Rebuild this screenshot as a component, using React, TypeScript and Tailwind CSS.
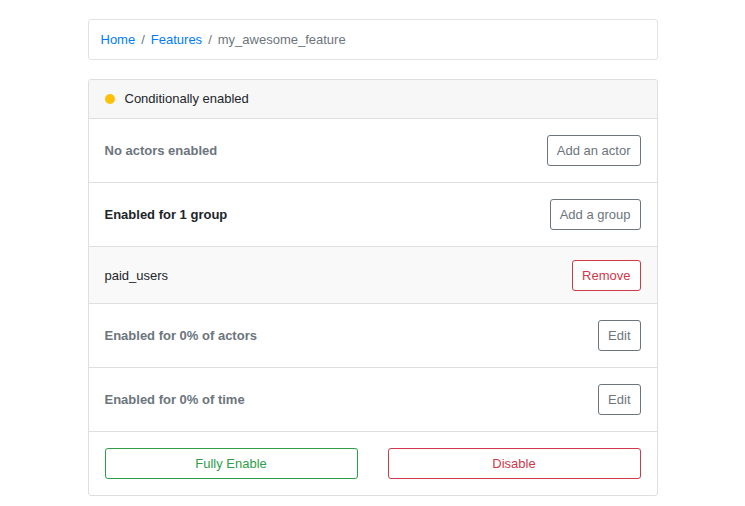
import React from "react";

const btnBase =
  "h-[31px] px-[9px] rounded-[3px] border bg-white text-[13px] leading-none flex items-center justify-center";

function Row({
  label,
  labelClass,
  button,
  buttonClass,
  bg = "bg-white",
  h = "h-[64px]",
}: {
  label: string;
  labelClass: string;
  button: string;
  buttonClass: string;
  bg?: string;
  h?: string;
}) {
  return (
    <div className={`${h} ${bg} border-b border-[#dfdfdf] flex items-center justify-between px-4`}>
      <span className={labelClass}>{label}</span>
      <button className={`${btnBase} ${buttonClass}`}>{button}</button>
    </div>
  );
}

export default function App() {
  return (
    <div
      className="min-h-[506px] w-full bg-white text-[13px] text-[#212529]"
      style={{ fontFamily: '"Liberation Sans", Arial, sans-serif' }}
    >
      <div className="w-[570px] mx-auto pt-[19px]">
        <nav className="h-[41px] border border-[#e2e2e2] rounded-[3px] flex items-center px-3 gap-[6px]">
          <a className="text-[#007bff]">Home</a>
          <span className="text-[#6c757d]">/</span>
          <a className="text-[#007bff]">Features</a>
          <span className="text-[#6c757d]">/</span>
          <span className="text-[#6c757d]">my_awesome_feature</span>
        </nav>

        <div className="mt-[19px] border border-[#dfdfdf] rounded-[3px] overflow-hidden">
          <div className="h-[39px] bg-[#f7f7f7] border-b border-[#dfdfdf] flex items-center px-4 gap-[10px]">
            <span className="w-[10px] h-[10px] rounded-full bg-[#ffc107]" />
            <span>Conditionally enabled</span>
          </div>
          <Row
            label="No actors enabled"
            labelClass="font-bold text-[#6c757d]"
            button="Add an actor"
            buttonClass="border-[#6c757d] text-[#6c757d]"
          />
          <Row
            label="Enabled for 1 group"
            labelClass="font-bold text-[#212529]"
            button="Add a group"
            buttonClass="border-[#6c757d] text-[#6c757d]"
          />
          <Row
            label="paid_users"
            labelClass="text-[#212529] pt-[2px]"
            button="Remove"
            buttonClass="border-[#d0394a] text-[#d0394a]"
            bg="bg-[#f9f9f9]"
            h="h-[57px]"
          />
          <Row
            label="Enabled for 0% of actors"
            labelClass="font-bold text-[#6c757d]"
            button="Edit"
            buttonClass="border-[#6c757d] text-[#6c757d]"
          />
          <Row
            label="Enabled for 0% of time"
            labelClass="font-bold text-[#6c757d]"
            button="Edit"
            buttonClass="border-[#6c757d] text-[#6c757d]"
          />
          <div className="h-[63px] grid grid-cols-2 gap-[30px] px-4 items-center">
            <button className={`${btnBase} w-full border-[#2f9e4a] text-[#2f9e4a]`}>Fully Enable</button>
            <button className={`${btnBase} w-full border-[#d0394a] text-[#d0394a]`}>Disable</button>
          </div>
        </div>
      </div>
    </div>
  );
}
